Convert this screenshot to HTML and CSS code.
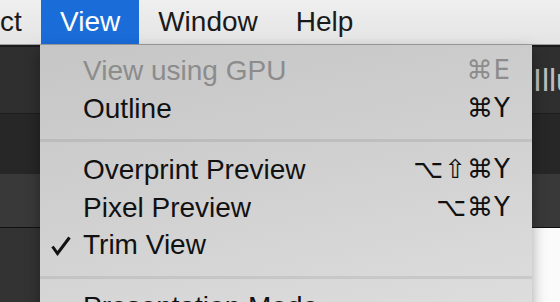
FILE: index.html
```html
<!DOCTYPE html>
<html>
<head>
    <title>View Menu</title>
    <link rel="stylesheet" href="styles.css">
</head>
<body>
    <div class="menubar">
        <span class="menu-title first">ct</span>
        <span class="menu-title active">View</span>
        <span class="menu-title">Window</span>
        <span class="menu-title">Help</span>
    </div>

    <div class="app">
        <div class="titlebar"><span class="app-name">Illustrator</span></div>
        <div class="controlbar"></div>
        <div class="docbar"></div>
        <div class="workarea">
            <div class="toolpanel"></div>
            <div class="canvas"></div>
        </div>
    </div>

    <div class="dropdown">
        <div class="item disabled"><span class="check"></span><span class="label">View using GPU</span><span class="keys">⌘E</span></div>
        <div class="item"><span class="check"></span><span class="label">Outline</span><span class="keys">⌘Y</span></div>
        <div class="separator"></div>
        <div class="item"><span class="check"></span><span class="label">Overprint Preview</span><span class="keys">⌥⇧⌘Y</span></div>
        <div class="item"><span class="check"></span><span class="label">Pixel Preview</span><span class="keys">⌥⌘Y</span></div>
        <div class="item">
            <span class="check">
                <svg width="20" height="20" viewBox="0 0 20 20"><polyline points="1.5,10.5 6.5,17.5 18.5,1.5" fill="none" stroke="#111" stroke-width="3" stroke-linejoin="miter" stroke-linecap="butt"/></svg>
            </span>
            <span class="label">Trim View</span><span class="keys"></span>
        </div>
        <div class="separator"></div>
        <div class="item"><span class="check"></span><span class="label">Presentation Mode</span><span class="keys"></span></div>
    </div>
</body>
</html>
```

FILE: styles.css
```css
html, body { margin: 0; padding: 0; width: 560px; height: 302px; overflow: hidden; }
body { font-family: "Liberation Sans", "DejaVu Sans", Arial, sans-serif; font-size: 28px; color: #111; position: relative; background: #393939; }

.menubar { display: flex; height: 44px; line-height: 44px; background: linear-gradient(#efefef, #e4e4e4); border-bottom: 1px solid #9f9f9f; }
.menu-title { padding: 0 19px; color: #1a1a1a; white-space: nowrap; }
.menu-title.first { padding-left: 0; width: 22px; }
.menu-title.active { background: #1a6cd9; color: #fff; }

.app { display: flex; flex-direction: column; }
.titlebar { height: 66px; background: #2f2f2f; border-top: 2px solid #1b1b1b; display: flex; align-items: center; padding-left: 533px; }
.app-name { color: #bdbdbd; font-size: 32px; white-space: nowrap; }
.controlbar { height: 60px; background: #272727; border-top: 1px solid #1e1e1e; }
.docbar { height: 53px; background: #393939; border-bottom: 1px solid #111; }
.workarea { display: flex; height: 120px; }
.toolpanel { width: 80px; background: #333; }
.canvas { flex: 1; background: linear-gradient(90deg, #f0f0f0, #fbfbfb 40px); }

.dropdown { position: absolute; top: 45px; left: 40px; width: 492px; height: 280px; padding-top: 7px; background: linear-gradient(168deg, #c6c6c6 0%, #d0d0d0 45%, #dfdfdf 100%); box-shadow: 0 6px 14px rgba(0,0,0,0.35); }
.item { display: flex; align-items: center; height: 37.5px; line-height: 37.5px; padding-right: 21px; }
.item.disabled { color: #8c8c8c; }
.check { width: 43px; display: flex; justify-content: flex-end; padding-right: 12px; box-sizing: border-box; }
.check svg { display: block; margin-top: 2px; }
.label { flex: 1; white-space: nowrap; }
.keys { font-family: "DejaVu Sans", "Liberation Sans", sans-serif; font-size: 26px; letter-spacing: 1px; white-space: nowrap; }
.separator { height: 3px; margin: 12px 0 9px; background: rgba(0,0,0,0.08); }
```
